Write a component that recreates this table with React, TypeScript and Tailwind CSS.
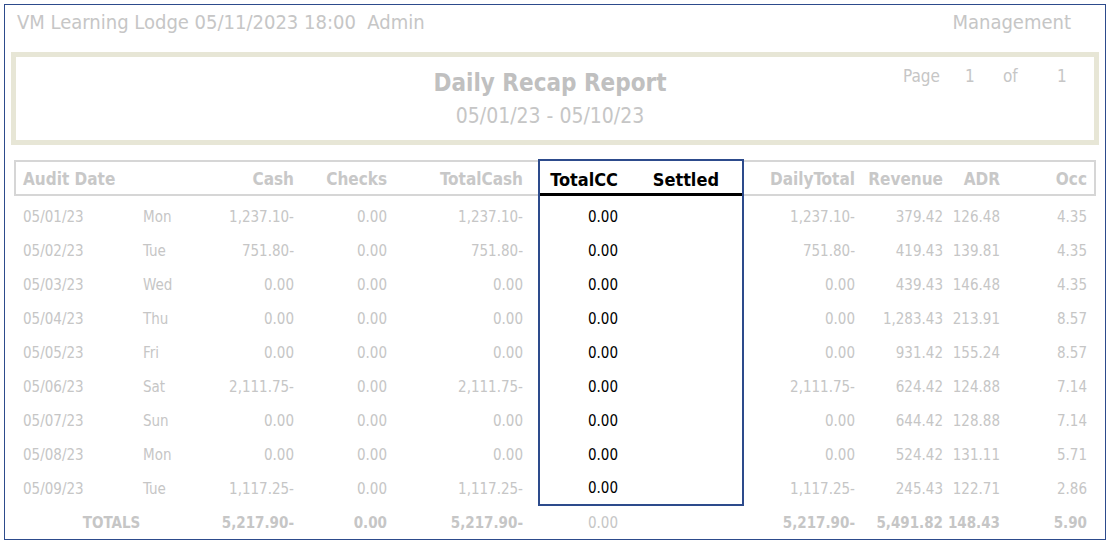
import type { ReactNode } from "react";

type Row = {
  date: string;
  day: string;
  cash: string;
  checks: string;
  totalCash: string;
  totalCC: string;
  settled: string;
  dailyTotal: string;
  revenue: string;
  adr: string;
  occ: string;
};

const rows: Row[] = [
  { date: "05/01/23", day: "Mon", cash: "1,237.10-", checks: "0.00", totalCash: "1,237.10-", totalCC: "0.00", settled: "", dailyTotal: "1,237.10-", revenue: "379.42", adr: "126.48", occ: "4.35" },
  { date: "05/02/23", day: "Tue", cash: "751.80-", checks: "0.00", totalCash: "751.80-", totalCC: "0.00", settled: "", dailyTotal: "751.80-", revenue: "419.43", adr: "139.81", occ: "4.35" },
  { date: "05/03/23", day: "Wed", cash: "0.00", checks: "0.00", totalCash: "0.00", totalCC: "0.00", settled: "", dailyTotal: "0.00", revenue: "439.43", adr: "146.48", occ: "4.35" },
  { date: "05/04/23", day: "Thu", cash: "0.00", checks: "0.00", totalCash: "0.00", totalCC: "0.00", settled: "", dailyTotal: "0.00", revenue: "1,283.43", adr: "213.91", occ: "8.57" },
  { date: "05/05/23", day: "Fri", cash: "0.00", checks: "0.00", totalCash: "0.00", totalCC: "0.00", settled: "", dailyTotal: "0.00", revenue: "931.42", adr: "155.24", occ: "8.57" },
  { date: "05/06/23", day: "Sat", cash: "2,111.75-", checks: "0.00", totalCash: "2,111.75-", totalCC: "0.00", settled: "", dailyTotal: "2,111.75-", revenue: "624.42", adr: "124.88", occ: "7.14" },
  { date: "05/07/23", day: "Sun", cash: "0.00", checks: "0.00", totalCash: "0.00", totalCC: "0.00", settled: "", dailyTotal: "0.00", revenue: "644.42", adr: "128.88", occ: "7.14" },
  { date: "05/08/23", day: "Mon", cash: "0.00", checks: "0.00", totalCash: "0.00", totalCC: "0.00", settled: "", dailyTotal: "0.00", revenue: "524.42", adr: "131.11", occ: "5.71" },
  { date: "05/09/23", day: "Tue", cash: "1,117.25-", checks: "0.00", totalCash: "1,117.25-", totalCC: "0.00", settled: "", dailyTotal: "1,117.25-", revenue: "245.43", adr: "122.71", occ: "2.86" },
];

const font = { fontFamily: '"DejaVu Sans Condensed", "DejaVu Sans", Tahoma, sans-serif' };

function Left({ children }: { children: ReactNode }) {
  return <div className="flex w-[524px] items-center pl-[2px]">{children}</div>;
}

function Right({ children }: { children: ReactNode }) {
  return <div className="flex w-[352px] items-center pr-[9px]">{children}</div>;
}

export default function App() {
  return (
    <div className="bg-white p-1" style={font}>
      <div className="h-[536px] w-[1102px] border border-[#2d4b8c] bg-white">
        <div className="flex h-[38px] items-center justify-between pb-[4px] pl-[12px] pr-[34px] text-[20px] text-[#c6c6c6]">
          <span className="whitespace-pre">VM Learning Lodge 05/11/2023 18:00  Admin</span>
          <span>Management</span>
        </div>

        <div className="mx-[6px] mt-[9px] flex h-[93px] border-[5px] border-[#e7e6d6]">
          <div className="w-[181px]" />
          <div className="flex flex-1 flex-col items-center pt-[10px]">
            <div className="text-[24px] font-bold leading-[32px] text-[#c0c0c0]">Daily Recap Report</div>
            <div className="mt-[5px] text-[21px] leading-[24px] text-[#c6c6c6]">05/01/23 - 05/10/23</div>
          </div>
          <div className="flex w-[191px] pt-[8px] text-[17px] leading-[22px] text-[#c6c6c6]">
            <span className="w-[62px]">Page</span>
            <span className="w-[38px]">1</span>
            <span className="w-[54px]">of</span>
            <span>1</span>
          </div>
        </div>

        <div className="ml-[9px] mt-[14px] text-[15px] text-[#c6c6c6]">
          {/* header */}
          <div className="flex h-[37px] text-[17px] font-bold text-[#c8c8c8]">
            <div className="mt-[1px] flex h-[36px] w-[524px] items-center border-y-2 border-l-2 border-[#d6d6d6] pt-[4px]">
              <div className="w-[127px] pl-[7px]">Audit Date</div>
              <div className="w-[57px]" />
              <div className="w-[94px] text-right">Cash</div>
              <div className="w-[93px] text-right">Checks</div>
              <div className="w-[151px] pr-[15px] text-right">TotalCash</div>
            </div>
            <div className="flex w-[206px] flex-col border-x-2 border-t-2 border-[#2d4b8c] text-black">
              <div className="flex flex-1 items-center pt-[4px]">
                <div className="w-[90px] pr-[12px] text-right text-[18px]">TotalCC</div>
                <div className="w-[112px] pr-[23px] text-right text-[18px]">Settled</div>
              </div>
              <div className="h-[3px] bg-black" />
            </div>
            <div className="mt-[1px] flex h-[36px] w-[352px] items-center border-y-2 border-r-2 border-[#d6d6d6] pr-[7px] pt-[4px]">
              <div className="w-[111px] text-right">DailyTotal</div>
              <div className="w-[88px] text-right">Revenue</div>
              <div className="w-[57px] text-right">ADR</div>
              <div className="w-[87px] text-right">Occ</div>
            </div>
          </div>

          {rows.map((r, i) => (
            <div key={r.date} className={i === 0 ? "flex h-[38px] [&>div]:pt-[5px]" : "flex h-[34px]"}>
              <Left>
                <div className="w-[127px] pl-[7px]">{r.date}</div>
                <div className="w-[57px]">{r.day}</div>
                <div className="w-[94px] text-right">{r.cash}</div>
                <div className="w-[93px] text-right">{r.checks}</div>
                <div className="w-[151px] pr-[15px] text-right">{r.totalCash}</div>
              </Left>
              <div
                className={
                  i === rows.length - 1
                    ? "flex w-[206px] items-center border-x-2 border-b-2 border-[#2d4b8c] pt-[1px] text-black"
                    : "flex w-[206px] items-center border-x-2 border-[#2d4b8c] text-black"
                }
              >
                <div className="w-[90px] pr-[12px] text-right">{r.totalCC}</div>
                <div className="w-[112px] pr-[23px] text-right">{r.settled}</div>
              </div>
              <Right>
                <div className="w-[111px] text-right">{r.dailyTotal}</div>
                <div className="w-[88px] text-right">{r.revenue}</div>
                <div className="w-[57px] text-right">{r.adr}</div>
                <div className="w-[87px] text-right">{r.occ}</div>
              </Right>
            </div>
          ))}

          {/* totals */}
          <div className="flex h-[34px] font-semibold">
            <Left>
              <div className="w-[184px] pl-[7px] text-center">TOTALS</div>
              <div className="w-[94px] text-right">5,217.90-</div>
              <div className="w-[93px] text-right">0.00</div>
              <div className="w-[151px] pr-[15px] text-right">5,217.90-</div>
            </Left>
            <div className="flex w-[206px] items-center px-[2px] font-normal">
              <div className="w-[90px] pr-[12px] text-right">0.00</div>
            </div>
            <Right>
              <div className="w-[111px] text-right">5,217.90-</div>
              <div className="w-[88px] text-right">5,491.82</div>
              <div className="w-[57px] text-right">148.43</div>
              <div className="w-[87px] text-right">5.90</div>
            </Right>
          </div>
        </div>
      </div>
    </div>
  );
}
